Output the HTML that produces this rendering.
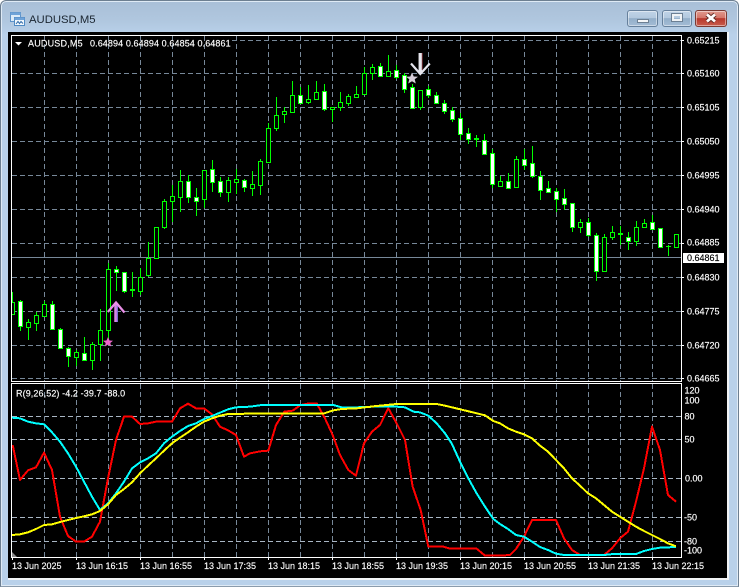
<!DOCTYPE html>
<html>
<head>
<meta charset="utf-8">
<title>AUDUSD,M5</title>
<style>
html,body{margin:0;padding:0;background:#fff;width:739px;height:586px;overflow:hidden}
#win{position:absolute;left:0;top:0;width:737px;height:585px;border:1px solid #6d7f91;border-bottom-color:#8a9bac;border-radius:6px 6px 0 0;background:linear-gradient(#a9bfd7 0,#b0c7df 20px,#b9d1ea 34px,#b9d1ea 100%);box-shadow:inset 0 0 0 1px #dfeaf5}
#client{position:absolute;left:8px;top:32px;width:721px;height:548px;background:#000;border-bottom:0}
#bl{position:absolute;left:8px;top:578px;width:721px;height:2px;background:#f1f3f5}
#br{position:absolute;left:727px;top:32px;width:2px;height:548px;background:#f1f3f5}
.btn{position:absolute;top:10px;height:17px;box-sizing:border-box;border:1px solid #66809c;border-radius:3px;box-shadow:inset 0 0 0 1px rgba(255,255,255,.45);background:linear-gradient(#c0d3e7 0,#b3c9df 45%,#93aec9 50%,#a3bcd5 100%)}
#close{background:linear-gradient(#e09a8e 0,#d5766a 45%,#b7372b 50%,#c95c4d 100%);border-color:#7b3a33}
svg{position:absolute;left:0;top:0}
text{font-family:"Liberation Sans",sans-serif;font-size:9px;fill:#fff;stroke:#fff;stroke-width:.15px}
</style>
</head>
<body>
<div id="win"></div>
<div id="client"></div>
<div id="bl"></div>
<div id="br"></div>
<div class="btn" style="left:627px;width:31px"><div style="position:absolute;left:9px;top:8px;width:10px;height:2px;background:#f4f6f8;border:1px solid #6c7f93;box-sizing:content-box"></div></div>
<div class="btn" style="left:662px;width:30px"><div style="position:absolute;left:9px;top:3px;width:6px;height:3px;border:2px solid #f0f3f6;outline:1px solid #6c7f93"></div></div>
<div class="btn" id="close" style="left:695px;width:32px"></div>
<svg width="739" height="586" viewBox="0 0 739 586" xmlns="http://www.w3.org/2000/svg">
<defs>
<clipPath id="m"><rect x="12" y="36" width="669" height="345"/></clipPath>
<clipPath id="s"><rect x="12" y="384" width="669" height="173"/></clipPath>
</defs>

<!-- close glyph -->
<path d="M707 14.500L715 21.500M715 14.500L707 21.500" stroke="#5e2a24" stroke-width="4.500" fill="none"/>
<path d="M707 14.500L715 21.500M715 14.500L707 21.500" stroke="#fff" stroke-width="2.800" fill="none"/>

<!-- title icon -->
<rect x="10.500" y="12.500" width="10" height="9" fill="#dcebf8" stroke="#5e93c9"/>
<rect x="10.500" y="12.500" width="10" height="2.500" fill="#6fa3d8"/>
<rect x="14.500" y="17.500" width="10" height="8" fill="#f2f8fd" stroke="#4f8ac4"/>
<rect x="14.500" y="17.500" width="10" height="2.500" fill="#6fa3d8"/>
<path d="M16 24L18 21.500L19.500 23.500L21 21.500L23 23.500" stroke="#2f6aa8" fill="none"/>
<text x="29" y="23" style="font-size:11.300px;fill:#1a2530;stroke:none">AUDUSD,M5</text>

<!-- grid main -->
<g shape-rendering="crispEdges" fill="none">
<path stroke="#778899" stroke-dasharray="5 3" d="M232 40.500H681M12 73.500H681M12 107.500H681M12 141.500H681M12 175.500H681M12 209.500H681M12 243.500H681M12 277.500H681M12 311.500H681M12 345.500H681M12 378.500H681"/>
<path stroke="#778899" stroke-dasharray="5 3" d="M44.500 36V381M76.500 36V381M108.500 36V381M140.500 36V381M172.500 36V381M204.500 36V381M236.500 36V381M268.500 36V381M300.500 36V381M332.500 36V381M364.500 36V381M396.500 36V381M428.500 36V381M460.500 36V381M492.500 36V381M524.500 36V381M556.500 36V381M588.500 36V381M620.500 36V381M652.500 36V381"/>
<path stroke="#778899" d="M12 257.500H681"/>
<!-- grid sub -->
<path stroke="#a9b6c4" stroke-dasharray="5 3" d="M12 416.500H681M12 439.500H681M12 478.500H681M12 517.500H681M12 541.500H681"/>
<path stroke="#778899" stroke-dasharray="5 3" d="M44.500 384V557M76.500 384V557M108.500 384V557M140.500 384V557M172.500 384V557M204.500 384V557M236.500 384V557M268.500 384V557M300.500 384V557M332.500 384V557M364.500 384V557M396.500 384V557M428.500 384V557M460.500 384V557M492.500 384V557M524.500 384V557M556.500 384V557M588.500 384V557M620.500 384V557M652.500 384V557"/>
</g>

<!-- candles -->
<g clip-path="url(#m)" shape-rendering="crispEdges">
<path stroke="#00ff00" fill="none" d="M12.500 292V315M20.500 300V331M28.500 319V340M36.500 312V331M44.500 301V317M52.500 301V330M60.500 328V349M68.500 347V367M76.500 350V366M84.500 337V360M92.500 342V370M100.500 309V361M108.500 263V343M116.500 266V291M124.500 272V293M132.500 272V297M140.500 268V295M148.500 242V277M156.500 227V259M164.500 199V229M172.500 185V222M180.500 170V212M188.500 175V203M196.500 188V216M204.500 170V208M212.500 160V192M220.500 177V197M228.500 177V202M236.500 169V194M244.500 179V192M252.500 171V196M260.500 159V195M268.500 123V163M276.500 97V131M284.500 107V123M292.500 81V113M300.500 87V104M308.500 85V104M316.500 81V99M324.500 84V111M332.500 107V122M340.500 92V111M348.500 94V106M356.500 86V97M364.500 67V94M372.500 64V80M380.500 63V77M388.500 55V76M396.500 65V79M404.500 73V93M412.500 84V108M420.500 90V110M428.500 86V98M436.500 92V103M444.500 100V114M452.500 107V122M460.500 113V140M468.500 128V144M476.500 135V147M484.500 134V155M492.500 149V188M500.500 176V186M508.500 173V189M516.500 156V187M524.500 149V170M532.500 146V178M540.500 171V200M548.500 181V192M556.500 188V212M564.500 189V210M572.500 203V232M580.500 219V233M588.500 218V237M596.500 233V281M604.500 234V271M612.500 226V240M620.500 226V245M628.500 232V250M636.500 221V246M644.500 219V228M652.500 215V230M660.500 228V247M668.500 245V256M676.500 234V247"/>
<!-- hollow -->
<path stroke="#00ff00" fill="#000" d="M10.500 302.500h4V314.500h-4zM26.500 322.500h4V327.500h-4zM34.500 315.500h4V323.500h-4zM42.500 304.500h4V316.500h-4zM74.500 352.500h4V357.500h-4zM90.500 344.500h4V360.500h-4zM98.500 330.500h4V344.500h-4zM106.500 269.500h4V330.500h-4zM138.500 277.500h4V291.500h-4zM146.500 258.500h4V275.500h-4zM154.500 227.500h4V258.500h-4zM162.500 201.500h4V227.500h-4zM170.500 196.500h4V201.500h-4zM178.500 181.500h4V197.500h-4zM202.500 170.500h4V199.500h-4zM226.500 180.500h4V192.500h-4zM234.500 179.500h4V182.500h-4zM250.500 184.500h4V188.500h-4zM258.500 161.500h4V185.500h-4zM266.500 128.500h4V162.500h-4zM274.500 115.500h4V128.500h-4zM282.500 111.500h4V114.500h-4zM290.500 95.500h4V112.500h-4zM306.500 99.500h4V102.500h-4zM314.500 92.500h4V99.500h-4zM330.500 107.500h4V109.500h-4zM338.500 102.500h4V107.500h-4zM346.500 96.500h4V103.500h-4zM354.500 94.500h4V97.500h-4zM362.500 73.500h4V94.500h-4zM370.500 67.500h4V73.500h-4zM386.500 71.500h4V76.500h-4zM418.500 90.500h4V107.500h-4zM498.500 181.500h4V186.500h-4zM514.500 159.500h4V187.500h-4zM578.500 222.500h4V227.500h-4zM602.500 237.500h4V271.500h-4zM610.500 232.500h4V237.500h-4zM634.500 227.500h4V241.500h-4zM642.500 223.500h4V227.500h-4zM674.500 234.500h4V247.500h-4z"/>
<!-- filled -->
<path stroke="#00ff00" fill="#fff" d="M18.500 301.500h4V326.500h-4zM50.500 304.500h4V329.500h-4zM58.500 329.500h4V348.500h-4zM66.500 348.500h4V356.500h-4zM82.500 353.500h4V360.500h-4zM114.500 269.500h4V272.500h-4zM122.500 272.500h4V291.500h-4zM186.500 181.500h4V197.500h-4zM194.500 197.500h4V201.500h-4zM210.500 169.500h4V182.500h-4zM218.500 181.500h4V192.500h-4zM242.500 180.500h4V187.500h-4zM298.500 95.500h4V103.500h-4zM322.500 91.500h4V109.500h-4zM378.500 66.500h4V76.500h-4zM394.500 70.500h4V77.500h-4zM402.500 75.500h4V89.500h-4zM410.500 87.500h4V108.500h-4zM426.500 89.500h4V95.500h-4zM434.500 95.500h4V103.500h-4zM442.500 103.500h4V111.500h-4zM450.500 110.500h4V119.500h-4zM458.500 118.500h4V134.500h-4zM466.500 133.500h4V139.500h-4zM482.500 140.500h4V154.500h-4zM490.500 153.500h4V184.500h-4zM506.500 181.500h4V188.500h-4zM522.500 159.500h4V165.500h-4zM530.500 163.500h4V176.500h-4zM538.500 176.500h4V190.500h-4zM546.500 188.500h4V192.500h-4zM554.500 191.500h4V199.500h-4zM562.500 198.500h4V204.500h-4zM570.500 203.500h4V227.500h-4zM586.500 222.500h4V235.500h-4zM594.500 235.500h4V271.500h-4zM626.500 237.500h4V241.500h-4zM650.500 222.500h4V229.500h-4zM658.500 228.500h4V247.500h-4z"/>
<!-- doji -->
<path fill="#00ff00" d="M130 289h5v2h-5zM474 138h5v2h-5zM618 233h5v2h-5zM666 246h5v1h-5z"/>
</g>

<!-- arrows and stars -->
<g clip-path="url(#m)" fill="none">
<path d="M116 322V303" stroke="#d984e6" stroke-width="3.500"/>
<path d="M117.300 322V304" stroke="#7f6ee0" stroke-width="1.200"/>
<path d="M107.800 312L116 302.500L124.500 312.500" stroke="#ea8fe8" stroke-width="2.200"/>
<polygon points="108,337 109.500,340.500 113,340.800 110.300,343 111.200,346.500 108,344.600 104.800,346.500 105.700,343 103,340.800 106.500,340.500" fill="#ee66cc"/>
<path d="M420.300 53V74" stroke="#e6e6ee" stroke-width="3.500"/>
<path d="M422.300 53V70" stroke="#6d2a30" stroke-width="1"/>
<path d="M411 63.500L420.300 74L429.800 63.500" stroke="#e6e6ee" stroke-width="2.200"/>
<polygon points="412,72.500 413.700,76.500 418,76.800 414.700,79.300 415.800,83.500 412,81.200 408.200,83.500 409.300,79.300 406,76.800 410.300,76.500" fill="#d6cdd8"/>
</g>

<!-- indicator lines -->
<g clip-path="url(#s)">
<g transform="translate(0,375) scale(.33333)" fill="none" stroke-width="6" stroke-linejoin="round" shape-rendering="crispEdges">
<polyline stroke="#ff0000" points="38,210 60,315 84,286 108,277 132,233 156,285 180,425 204,483 228,500 252,500 276,485 300,440 324,310 348,195 372,125 396,125 420,147 444,145 468,140 516,140 540,100 564,86 588,100 612,100 636,118 660,155 684,166 708,180 732,245 750,235 780,229 805,227 828,150 853,110 878,107 902,90 928,85 950,85 975,130 998,180 1020,240 1045,285 1068,302 1092,205 1116,170 1140,150 1165,100 1190,145 1215,195 1238,335 1262,405 1285,515 1330,515 1350,521 1430,521 1455,542 1500,542 1530,540 1548,522 1572,485 1596,435 1668,435 1692,490 1716,525 1740,540 1812,540 1836,520 1860,490 1884,470 1908,380 1932,280 1956,155 1980,225 2004,360 2028,380"/>
<polyline stroke="#00ffff" points="36,128 60,130 84,140 108,145 132,148 156,172 180,200 204,235 228,275 252,320 276,365 300,405 324,385 348,355 372,320 396,280 420,262 444,250 468,235 492,205 516,185 540,168 564,153 588,145 612,132 636,123 660,113 684,103 708,97 750,95 786,90 810,90 954,90 1000,90 1025,97 1070,97 1120,95 1190,95 1215,97 1240,110 1260,112 1285,122 1310,145 1335,175 1355,205 1380,260 1405,310 1430,355 1455,395 1480,432 1500,447 1524,462 1548,480 1572,485 1596,500 1620,516 1644,525 1668,536 1692,540 1812,540 1840,537 1908,537 1932,528 1956,522 1980,518 2028,516"/>
<polyline stroke="#ffff00" points="36,480 60,478 84,472 108,462 132,450 156,448 180,441 204,435 228,429 252,424 276,418 300,408 324,388 348,360 372,342 396,322 420,295 444,272 468,250 492,227 516,205 540,188 564,172 588,155 612,140 636,130 660,122 684,117 750,116 970,116 1000,106 1025,102 1070,100 1120,94 1190,87 1310,87 1335,92 1360,98 1410,110 1455,121 1480,138 1500,145 1524,160 1548,170 1572,178 1596,190 1620,212 1644,230 1668,255 1692,280 1716,310 1740,332 1764,355 1788,370 1812,390 1836,410 1860,425 1884,440 1908,455 1932,468 1956,480 1980,492 2004,505 2028,514"/>
</g>
</g>

<!-- frames -->
<g shape-rendering="crispEdges" fill="none" stroke="#fff">
<rect x="11.500" y="35.500" width="670" height="346"/>
<rect x="11.500" y="383.500" width="670" height="174"/>
<path d="M682 40.500h2M682 73.500h2M682 107.500h2M682 141.500h2M682 175.500h2M682 209.500h2M682 243.500h2M682 277.500h2M682 311.500h2M682 345.500h2M682 378.500h2M12.500 558v2M76.500 558v2M140.500 558v2M204.500 558v2M268.500 558v2M332.500 558v2M396.500 558v2M460.500 558v2M524.500 558v2M588.500 558v2M652.500 558v2"/>
</g>
<polygon points="12,552 17,557 12,557" fill="#8a8a8a"/>

<!-- header labels -->
<polygon points="15,42 22,42 18.500,45.500" fill="#fff"/>
<text x="28" y="46.500" style="letter-spacing:.2px">AUDUSD,M5</text>
<text x="90" y="46.500" style="letter-spacing:.1px">0.64894 0.64894 0.64854 0.64861</text>
<text x="16" y="396.500" style="letter-spacing:.1px">R(9,26,52) -4.2 -39.7 -88.0</text>

<!-- price axis -->
<text x="687" y="43.500">0.65215</text>
<text x="687" y="76.500">0.65160</text>
<text x="687" y="110.500">0.65105</text>
<text x="687" y="144.500">0.65050</text>
<text x="687" y="178.500">0.64995</text>
<text x="687" y="212.500">0.64940</text>
<text x="687" y="245.500">0.64885</text>
<text x="687" y="280.500">0.64830</text>
<text x="687" y="314.500">0.64775</text>
<text x="687" y="348.500">0.64720</text>
<text x="687" y="381.500">0.64665</text>
<rect x="683" y="253" width="41" height="10" fill="#fff"/>
<text x="687" y="261" style="fill:#000;stroke:#000">0.64861</text>

<!-- sub axis -->
<text x="684.500" y="393.500">120</text>
<text x="684.500" y="403.500">100</text>
<text x="684.500" y="419.500">80</text>
<text x="684.500" y="442.500">50</text>
<text x="685" y="481.500">0.00</text>
<text x="684" y="520.500">-50</text>
<text x="684" y="544.500">-80</text>
<text x="684" y="553.500">-100</text>

<!-- time axis -->
<text x="12" y="569">13 Jun 2025</text>
<text x="76" y="569">13 Jun 16:15</text>
<text x="140" y="569">13 Jun 16:55</text>
<text x="204" y="569">13 Jun 17:35</text>
<text x="268" y="569">13 Jun 18:15</text>
<text x="332" y="569">13 Jun 18:55</text>
<text x="396" y="569">13 Jun 19:35</text>
<text x="460" y="569">13 Jun 20:15</text>
<text x="524" y="569">13 Jun 20:55</text>
<text x="588" y="569">13 Jun 21:35</text>
<text x="652" y="569">13 Jun 22:15</text>
</svg>
</body>
</html>
